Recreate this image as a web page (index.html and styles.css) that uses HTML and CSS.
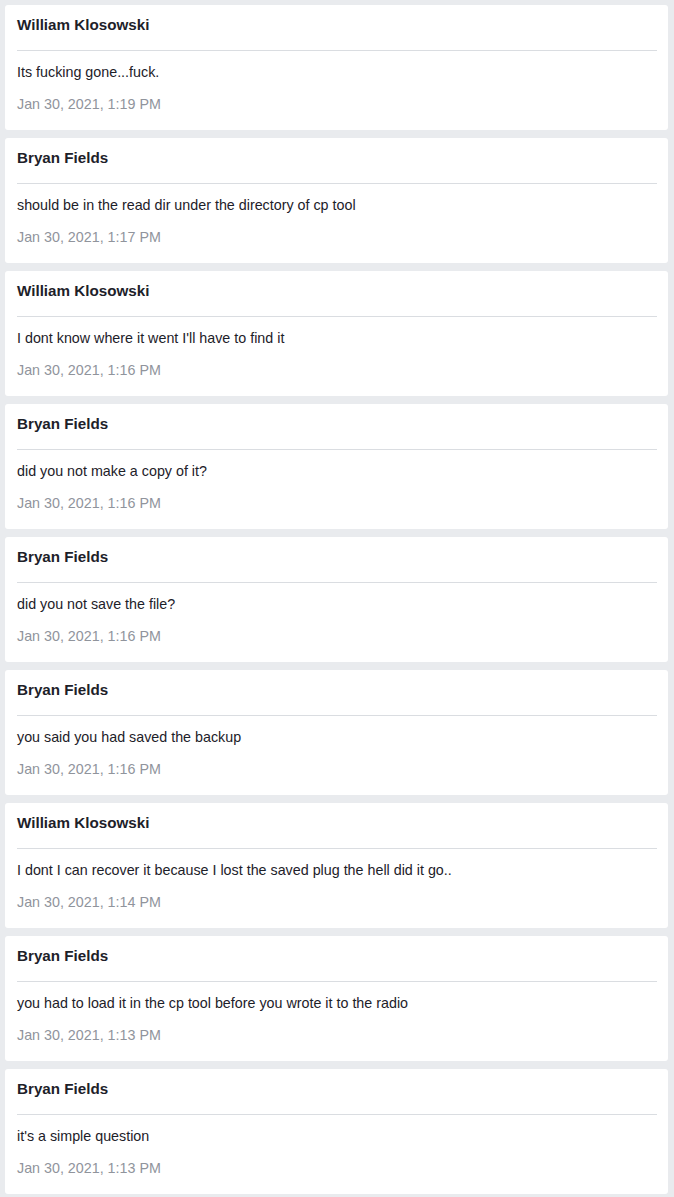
FILE: index.html
```html
<!DOCTYPE html>
<html lang="en">
<head>
<meta charset="utf-8">
<title>Messages</title>
<link rel="stylesheet" href="styles.css">
</head>
<body>
<main class="list">
  <article class="card">
    <h2 class="name">William Klosowski</h2>
    <p class="msg">Its fucking gone...fuck.</p>
    <time class="date">Jan 30, 2021, 1:19 PM</time>
  </article>
  <article class="card">
    <h2 class="name">Bryan Fields</h2>
    <p class="msg">should be in the read dir under the directory of cp tool</p>
    <time class="date">Jan 30, 2021, 1:17 PM</time>
  </article>
  <article class="card">
    <h2 class="name">William Klosowski</h2>
    <p class="msg">I dont know where it went I'll have to find it</p>
    <time class="date">Jan 30, 2021, 1:16 PM</time>
  </article>
  <article class="card">
    <h2 class="name">Bryan Fields</h2>
    <p class="msg">did you not make a copy of it?</p>
    <time class="date">Jan 30, 2021, 1:16 PM</time>
  </article>
  <article class="card">
    <h2 class="name">Bryan Fields</h2>
    <p class="msg">did you not save the file?</p>
    <time class="date">Jan 30, 2021, 1:16 PM</time>
  </article>
  <article class="card">
    <h2 class="name">Bryan Fields</h2>
    <p class="msg">you said you had saved the backup</p>
    <time class="date">Jan 30, 2021, 1:16 PM</time>
  </article>
  <article class="card">
    <h2 class="name">William Klosowski</h2>
    <p class="msg">I dont I can recover it because I lost the saved plug the hell did it go..</p>
    <time class="date">Jan 30, 2021, 1:14 PM</time>
  </article>
  <article class="card">
    <h2 class="name">Bryan Fields</h2>
    <p class="msg">you had to load it in the cp tool before you wrote it to the radio</p>
    <time class="date">Jan 30, 2021, 1:13 PM</time>
  </article>
  <article class="card">
    <h2 class="name">Bryan Fields</h2>
    <p class="msg">it's a simple question</p>
    <time class="date">Jan 30, 2021, 1:13 PM</time>
  </article>
</main>
</body>
</html>
```
FILE: styles.css
```css
html, body {
  margin: 0;
  padding: 0;
  background: #e9ebee;
}
body {
  padding: 5px 6px 0 5px;
  font-family: "Liberation Sans", Arial, Helvetica, sans-serif;
  color: #1d2129;
}
.list {
  display: flex;
  flex-direction: column;
  gap: 8px;
}
.card {
  background: #ffffff;
  border-radius: 3px;
  height: 125px;
  box-sizing: border-box;
  padding: 11px 11px 0 12px;
  display: flex;
  flex-direction: column;
}
.name {
  margin: 0;
  font-size: 15.2px;
  line-height: 18px;
  font-weight: bold;
  color: #1d2129;
  padding-bottom: 16px;
  border-bottom: 1px solid #dadde1;
}
.msg {
  margin: 12px 0 0 0;
  font-size: 14.3px;
  line-height: 18px;
  color: #1d2129;
}
.date {
  display: block;
  margin-top: 14px;
  font-size: 14.3px;
  line-height: 18px;
  color: #90949c;
}
```
